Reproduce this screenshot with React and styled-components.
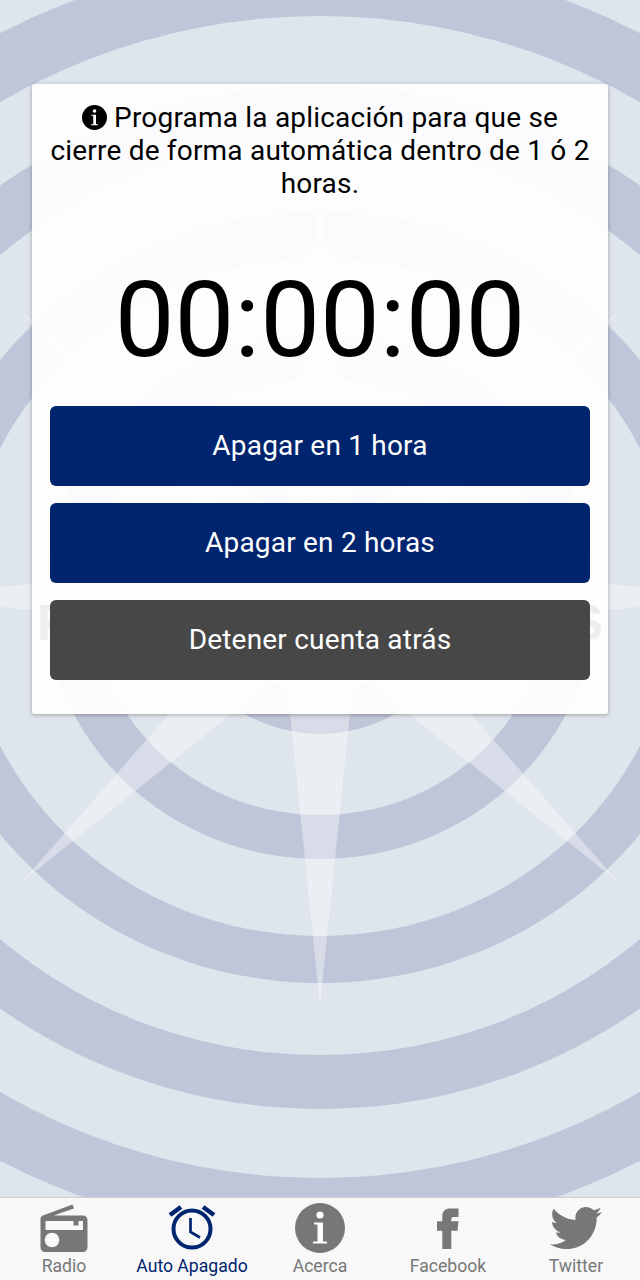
import styled, { createGlobalStyle } from 'styled-components';
import { FaTwitter } from 'react-icons/fa';

const GlobalStyle = createGlobalStyle`
  * {
    box-sizing: border-box;
  }
  body {
    margin: 0;
    font-family: Roboto, 'Liberation Sans', sans-serif;
  }
`;

const NAVY = '#01246f';
const GRAY = '#777777';

//rings of the backdrop, outside to inside
const RINGS = [
  [641, '#c0c6da'],
  [581, '#dfe5ec'],
  [512, '#c0c6da'],
  [458, '#dfe5ec'],
  [386, '#c0c6da'],
  [339, '#dfe5ec'],
  [262, '#c0c6da'],
  [218, '#dfe5ec'],
  [137, '#c0c6da'],
  [97, '#dfe5ec'],
];

//compass star: one triangle per point, same winding so they merge
const spike = (tx, ty, bx, by) => `M${tx} ${ty}L${bx} ${by}L${-bx} ${-by}Z`;
const STAR = [
  spike(0, 408, 40, 0),
  spike(-284, 285, 25, 25),
  spike(-408, 0, 0, 40),
  spike(-284, -285, -25, 25),
  spike(0, -408, -40, 0),
  spike(284, -285, -25, -25),
  spike(408, 0, 0, -40),
  spike(284, 285, 25, -25),
].join('');

const Backdrop = () => (
  <BackdropArt viewBox='0 0 640 1197' aria-hidden='true'>
    <rect width='640' height='1197' fill='#dfe5ec' />
    <g transform='translate(320 597) scale(1.05 1)'>
      {RINGS.map(([r, fill]) => (
        <circle key={r} r={r} fill={fill} />
      ))}
      <path d={STAR} fill='#fff' fillOpacity='0.38' />
    </g>
    <WatermarkText x='37' y='640' textLength='566' lengthAdjust='spacing'>
      RADIOS
    </WatermarkText>
  </BackdropArt>
);

const InfoIcon = ({ size, color }) => (
  <svg width={size} height={size} viewBox='0 0 50 50' aria-hidden='true'>
    <circle cx='25' cy='25' r='25' fill={color} />
    <circle cx='25' cy='12' r='3.6' fill='#fff' />
    <path d='M19 19.500H28V38.500H32V40.500H18V38.500H22.500V21.500H19Z' fill='#fff' />
  </svg>
);

const RadioIcon = () => (
  <svg width='48' height='48' viewBox='0 0 48 48' aria-hidden='true'>
    <path
      fill={GRAY}
      fillRule='evenodd'
      d='M3 11.500L32.500 0.500L34 4.500L13.500 11.500H43C45.500 11.500 47.500 13.500 47.500 16V43.500C47.500 46 45.500 48 43 48H5C2.500 48 0.500 46 0.500 43.500V15C0.500 13.500 1.500 12 3 11.500ZM5.500 17V26H43V17H38.500V21.500H33.500V17ZM12 28.700A7.300 7.300 0 1 0 12 43.300A7.300 7.300 0 1 0 12 28.700Z'
    />
  </svg>
);

const ClockIcon = () => (
  <svg width='48' height='48' viewBox='0 0 48 48' aria-hidden='true'>
    <g fill='none' stroke={NAVY}>
      <circle cx='24' cy='25' r='18.500' strokeWidth='4' />
      <path d='M22.500 14V28L32 33.500' strokeWidth='2.700' />
      <path d='M2 11L13 3M35 3L46 11' strokeWidth='4.500' />
    </g>
  </svg>
);

const FacebookIcon = () => (
  <svg width='22' height='41' viewBox='0 0 22 41' aria-hidden='true'>
    <path
      fill={GRAY}
      d='M5.300 41V22.700H0V13.300H5.300V8C5.300 3 8.500 0.500 13 0.500H21.500V9H16.500C15 9 14.300 9.700 14.300 11V13.300H21.500L20.500 22.700H14.300V41Z'
    />
  </svg>
);

const TABS = [
  { label: 'Radio', icon: <RadioIcon /> },
  { label: 'Auto Apagado', icon: <ClockIcon />, active: true },
  { label: 'Acerca', icon: <InfoIcon size={50} color={GRAY} /> },
  { label: 'Facebook', icon: <FacebookIcon /> },
  { label: 'Twitter', icon: <FaTwitter size={52} color={GRAY} /> },
];

const App = () => {
  return (
    <Page>
      <GlobalStyle />
      <Backdrop />
      <Content>
        <Card>
          <Intro>
            <InfoIcon size={25} color='#000' /> Programa la aplicación para que
            se cierre de forma automática dentro de 1 ó 2 horas.
          </Intro>
          <Timer>00:00:00</Timer>
          <Actions>
            <ActionButton>Apagar en 1 hora</ActionButton>
            <ActionButton>Apagar en 2 horas</ActionButton>
            <ActionButton $stop>Detener cuenta atrás</ActionButton>
          </Actions>
        </Card>
      </Content>
      <TabBar>
        {TABS.map(tab => (
          <Tab key={tab.label} $active={tab.active}>
            <TabIcon>{tab.icon}</TabIcon>
            {tab.label}
          </Tab>
        ))}
      </TabBar>
    </Page>
  );
};

const Page = styled.div`
  position: relative;
  display: flex;
  flex-direction: column;
  width: 640px;
  height: 1280px;
  overflow: hidden;
  background: #dfe5ec;
`;

const BackdropArt = styled.svg`
  position: absolute;
  top: 0;
  left: 0;
  width: 640px;
  height: 1197px;
`;

const WatermarkText = styled.text`
  font-family: 'Liberation Sans', sans-serif;
  font-weight: 700;
  font-size: 50px;
  fill: #000;
`;

const Content = styled.main`
  position: relative;
  flex: 1;
  padding: 84px 32px 0;
`;

const Card = styled.section`
  padding: 17px 18px 34px;
  border-radius: 3px;
  background: rgba(255, 255, 255, 0.93);
  box-shadow: 0 1px 4px rgba(0, 0, 0, 0.3);
`;

const Intro = styled.p`
  margin: 0;
  font-size: 28px;
  line-height: 33px;
  letter-spacing: 0.2px;
  text-align: center;
  color: #000;
  svg {
    vertical-align: -3px;
  }
`;

const Timer = styled.div`
  margin-top: 58px;
  font-size: 106.5px;
  line-height: 124px;
  text-align: center;
  color: #000;
`;

const Actions = styled.div`
  display: flex;
  flex-direction: column;
  gap: 17.5px;
  margin-top: 24px;
`;

const ActionButton = styled.button`
  height: 79.5px;
  padding: 0;
  border: 0;
  border-radius: 6px;
  font-family: inherit;
  font-size: 28px;
  letter-spacing: 0.2px;
  color: #fff;
  background: ${props => (props.$stop ? '#474747' : NAVY)};
`;

const TabBar = styled.nav`
  position: relative;
  display: grid;
  grid-template-columns: repeat(5, 1fr);
  height: 83px;
  padding-top: 4px;
  border-top: 1px solid #cfcfd4;
  background: #f8f8f8;
`;

const Tab = styled.div`
  display: flex;
  flex-direction: column;
  align-items: center;
  font-size: 17.6px;
  line-height: 20px;
  color: ${props => (props.$active ? NAVY : GRAY)};
`;

const TabIcon = styled.div`
  display: flex;
  align-items: center;
  justify-content: center;
  height: 52px;
  margin-bottom: 2px;
`;

export default App;
